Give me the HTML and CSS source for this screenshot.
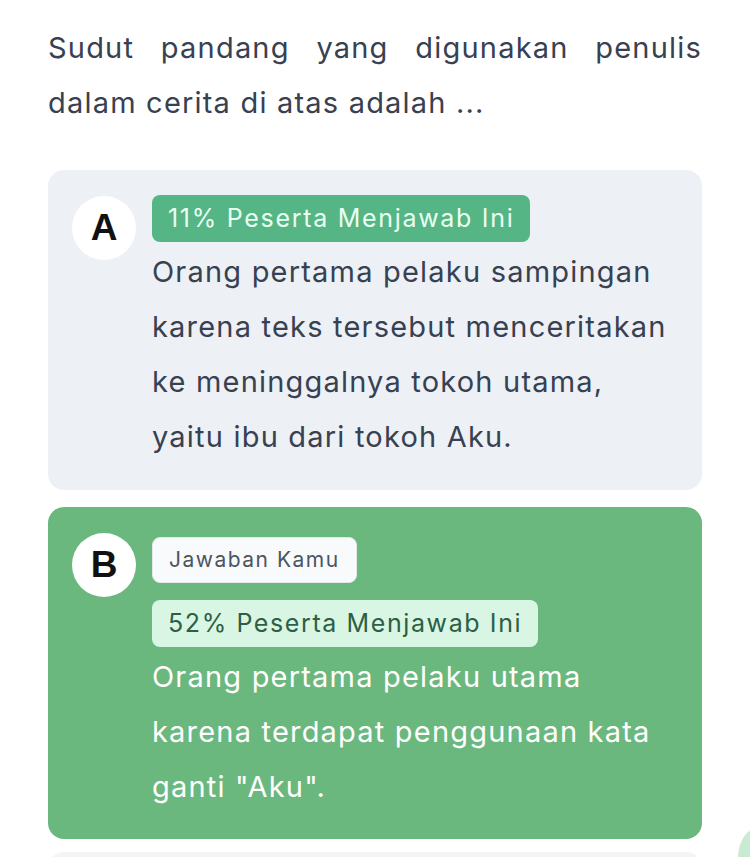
FILE: index.html
```html
<!DOCTYPE html>
<html lang="id">
<head>
  <meta charset="UTF-8" />
  <meta name="viewport" content="width=device-width, initial-scale=1.0" />
  <title>Soal</title>
  <link rel="stylesheet" href="styles.css">
</head>
<body>
<div class="quiz">
  <p class="question">
    Sudut pandang yang digunakan penulis dalam cerita di atas adalah ...
  </p>

  <div class="option">
    <div class="letter">A</div>
    <div class="body">
      <span class="tag stat">11% Peserta Menjawab Ini</span>
      <div class="answer">
        Orang pertama pelaku sampingan karena teks tersebut menceritakan ke meninggalnya tokoh utama, yaitu ibu dari tokoh Aku.
      </div>
    </div>
  </div>

  <div class="option picked">
    <div class="letter">B</div>
    <div class="body">
      <span class="tag mine">Jawaban Kamu</span>
      <span class="tag stat">52% Peserta Menjawab Ini</span>
      <div class="answer">
        Orang pertama pelaku utama karena terdapat penggunaan kata ganti "Aku".
      </div>
    </div>
  </div>

  <div class="option next"></div>
</div>
<div class="blob"></div>
</body>
</html>
```

FILE: styles.css
```css
body {
  margin: 0;
  padding: 0;
  background: white;
  font-family: "Inter", "Noto Sans", sans-serif;
  color: #374151;
  overflow: hidden;
}
.quiz {
  padding: 20px 48px 0 48px;
  display: flex;
  flex-direction: column;
  gap: 17px;
}
.question {
  margin: 0 0 23px 0;
  font-size: 29px;
  letter-spacing: 1.2px;
  line-height: 55px;
  text-align: justify;
  color: #374151;
}
.option {
  display: flex;
  gap: 16px;
  padding: 25px 24px 26px 24px;
  background: #edf0f5;
  border-radius: 16px;
}
.letter {
  flex: none;
  width: 64px;
  height: 64px;
  border-radius: 50%;
  background: white;
  display: flex;
  align-items: center;
  justify-content: center;
  font-family: "Liberation Sans", Arial, sans-serif;
  font-weight: 700;
  font-size: 37px;
  color: #111;
  margin-top: 1px;
}
.body {
  display: flex;
  flex-direction: column;
  align-items: flex-start;
}
.tag {
  display: inline-block;
  font-size: 25px;
  letter-spacing: 1.7px;
  line-height: 47px;
  padding: 0 16px;
  border-radius: 8px;
}
.stat {
  background: #55b585;
  color: #e9fff1;
}
.answer {
  font-size: 29px;
  letter-spacing: 1.2px;
  line-height: 55px;
  color: #374151;
  margin-top: 2px;
}

.picked {
  background: #6ab87e;
  padding-top: 30px;
  padding-bottom: 25px;
}
.picked .letter {
  margin-top: -4px;
}
.picked .tag.mine {
  background: #f9fafb;
  color: #4b5563;
  font-size: 21px;
  letter-spacing: 1.5px;
  line-height: 44px;
  border: 1px solid #e5e7eb;
  padding: 0 16px;
  margin-bottom: 17px;
}
.picked .stat {
  background: #d9f6e4;
  color: #2c5f45;
  letter-spacing: 1.6px;
}
.picked .answer {
  color: white;
}

.next {
  height: 40px;
  margin-top: -4px;
  background: #f3f4f6;
}
.blob {
  position: absolute;
  left: 738px;
  top: 828px;
  width: 40px;
  height: 60px;
  border-radius: 50%;
  background: #c9ebd3;
}
```
